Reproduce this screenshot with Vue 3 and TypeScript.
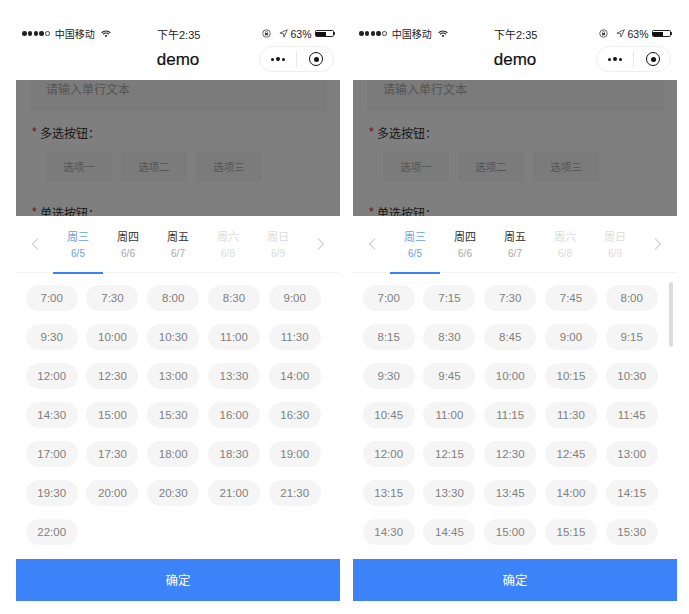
<script setup lang="ts">
interface Day {
  week: string
  date: string
  state: 'active' | 'normal' | 'disabled'
}

const days: Day[] = [
  { week: '周三', date: '6/5', state: 'active' },
  { week: '周四', date: '6/6', state: 'normal' },
  { week: '周五', date: '6/7', state: 'normal' },
  { week: '周六', date: '6/8', state: 'disabled' },
  { week: '周日', date: '6/9', state: 'disabled' }
]

const makeTimes = (step: number, count: number) => {
  const list: string[] = []
  for (let i = 0; i < count; i++) {
    const total = 7 * 60 + i * step
    const m = total % 60
    list.push(Math.floor(total / 60) + ':' + (m < 10 ? '0' + m : m))
  }
  return list
}

const phones = [
  { id: 'half', times: makeTimes(30, 31), scroll: false },
  { id: 'quarter', times: makeTimes(15, 35), scroll: true }
]
</script>

<template>
  <div class="page">
    <section v-for="phone in phones" :key="phone.id" class="phone">
      <div class="status">
        <div class="status-left">
          <span class="signal">
            <i v-for="n in 4" :key="n" class="dot"></i>
            <i class="dot empty"></i>
          </span>
          <span class="carrier">中国移动</span>
          <svg class="wifi" width="10" height="8" viewBox="0 0 11 9">
            <path d="M.6 3.1a7 7 0 0 1 9.8 0M2.2 4.8a4.7 4.7 0 0 1 6.600 0" fill="none" stroke="#222" stroke-width="1.200" />
            <path d="M3.900 6.400a2.300 2.300 0 0 1 3.200 0L5.500 8.200z" fill="#222" />
          </svg>
        </div>
        <span class="clock">下午2:35</span>
        <div class="status-right">
          <svg class="lock" width="9" height="9" viewBox="0 0 10 10">
            <circle cx="5" cy="5" r="4.200" fill="none" stroke="#444" stroke-width=".9" />
            <rect x="3.200" y="4.500" width="3.600" height="2.500" fill="#444" />
            <path d="M3.900 4.500V3.600a1.100 1.100 0 0 1 2.200 0v.9" fill="none" stroke="#444" stroke-width=".7" />
          </svg>
          <svg class="arrow" width="9" height="9" viewBox="0 0 10 10">
            <path d="M9.300.8 1 4.600l3.900.5.600 3.900z" fill="none" stroke="#444" stroke-width=".9" stroke-linejoin="round" />
          </svg>
          <span class="percent">63%</span>
          <span class="battery"><span class="battery-fill"></span></span>
          <span class="battery-tip"></span>
        </div>
      </div>

      <header class="nav">
        <span class="nav-title">demo</span>
        <div class="capsule">
          <span class="more"><i></i><i class="big"></i><i></i></span>
          <span class="divider"></span>
          <span class="target"><i></i></span>
        </div>
      </header>

      <div class="backdrop">
        <div class="form">
          <div class="input">请输入单行文本</div>
          <div class="label"><span class="star">*</span>多选按钮：</div>
          <div class="options">
            <span class="option">选项一</span>
            <span class="option">选项二</span>
            <span class="option">选项三</span>
          </div>
          <div class="label single"><span class="star">*</span>单选按钮：</div>
        </div>
        <div class="mask"></div>
      </div>

      <div class="picker">
        <div class="tabs">
          <svg class="chevron" width="8" height="14" viewBox="0 0 8 14">
            <path d="M7 1.500 1.500 7 7 12.500" fill="none" stroke="#b4b4b4" stroke-width="1" />
          </svg>
          <div class="tab-list">
            <div v-for="day in days" :key="day.date" class="tab" :class="day.state">
              <span class="tab-week">{{ day.week }}</span>
              <span class="tab-date">{{ day.date }}</span>
            </div>
          </div>
          <svg class="chevron" width="8" height="14" viewBox="0 0 8 14">
            <path d="M1 1.500 6.500 7 1 12.500" fill="none" stroke="#b4b4b4" stroke-width="1" />
          </svg>
        </div>

        <div class="slots">
          <div class="grid">
            <span v-for="t in phone.times" :key="t" class="slot">{{ t }}</span>
          </div>
          <div v-if="phone.scroll" class="scrollbar"></div>
        </div>

        <div class="confirm">确定</div>
      </div>
    </section>
  </div>
</template>

<style>
html,
body {
  margin: 0;
  background: #fff;
}
</style>

<style scoped>
.page {
  display: flex;
  gap: 13px;
  width: 689px;
  height: 614px;
  padding: 22px 0 0 16px;
  box-sizing: border-box;
  overflow: hidden;
  font-family: "Liberation Sans", "Noto Sans CJK SC", sans-serif;
}

.phone {
  display: flex;
  flex-direction: column;
  width: 324px;
  height: 579px;
}

.status {
  position: relative;
  display: flex;
  align-items: center;
  justify-content: space-between;
  height: 23px;
  padding: 0 5px 0 6px;
  color: #222;
  font-size: 10px;
}

.status-left,
.status-right {
  display: flex;
  align-items: center;
}

.signal {
  display: flex;
  gap: 1.300px;
  margin-right: 5px;
}

.dot {
  width: 4.500px;
  height: 4.500px;
  border-radius: 50%;
  background: #222;
}

.dot.empty {
  box-sizing: border-box;
  background: transparent;
  border: 0.6px solid #444;
}

.wifi {
  margin-left: 6px;
}

.clock {
  position: absolute;
  left: 141px;
  font-size: 11px;
}

.arrow {
  margin-left: 8px;
}

.percent {
  margin-left: 2px;
  font-size: 10.500px;
}

.battery {
  display: flex;
  width: 19px;
  height: 7px;
  margin-left: 3px;
  padding: 0.5px;
  box-sizing: border-box;
  border: 0.7px solid #222;
  border-radius: 1.500px;
}

.battery-fill {
  width: 62%;
  background: #111;
}

.battery-tip {
  width: 1.500px;
  height: 3px;
  background: #333;
}

.nav {
  position: relative;
  display: flex;
  align-items: center;
  justify-content: center;
  height: 35px;
}

.nav-title {
  margin-top: -5px;
  color: #111;
  font-size: 17px;
  -webkit-text-stroke: 0.2px #111;
}

.capsule {
  position: absolute;
  top: 1px;
  right: 6px;
  display: flex;
  align-items: center;
  width: 75px;
  height: 26px;
  box-sizing: border-box;
  border: 1px solid #f0f0f0;
  border-radius: 13px;
}

.more {
  display: flex;
  align-items: center;
  justify-content: center;
  gap: 1.500px;
  width: 36px;
}

.more i {
  width: 3px;
  height: 3px;
  border-radius: 50%;
  background: #111;
}

.more i.big {
  width: 4.500px;
  height: 4.500px;
}

.divider {
  width: 1px;
  height: 16px;
  background: #e8e8e8;
}

.target {
  display: flex;
  align-items: center;
  justify-content: center;
  width: 14px;
  height: 14px;
  margin-left: 12px;
  box-sizing: border-box;
  border: 1.500px solid #111;
  border-radius: 50%;
}

.target i {
  width: 5px;
  height: 5px;
  border-radius: 50%;
  background: #111;
}

.backdrop {
  position: relative;
  height: 136px;
  overflow: hidden;
  background: #fff;
}

.mask {
  position: absolute;
  inset: 0;
  background: rgba(0, 0, 0, 0.5);
}

.form {
  padding: 0 13px 0 14px;
}

.input {
  height: 31px;
  padding: 2px 0 0 16px;
  box-sizing: border-box;
  background: #f6f6f6;
  color: #aaa;
  font-size: 12px;
  line-height: 17px;
}

.label {
  display: flex;
  align-items: center;
  height: 18px;
  margin: 12px 0 0 2px;
  color: #333;
  font-size: 12px;
}

.star {
  width: 8px;
  color: #d0171b;
  font-size: 12px;
}

.options {
  display: flex;
  gap: 9px;
  margin: 10px 0 0 16px;
}

.option {
  display: flex;
  align-items: center;
  justify-content: center;
  width: 66px;
  height: 31px;
  background: #f6f6f6;
  color: #a8a8a8;
  font-size: 10.500px;
}

.label.single {
  margin-top: 21px;
}

.picker {
  display: flex;
  flex-direction: column;
  flex: 1;
  background: #fff;
}

.tabs {
  display: flex;
  align-items: center;
  justify-content: space-between;
  height: 57px;
  padding: 0 15px;
  box-sizing: border-box;
  border-bottom: 1px solid #f2f2f2;
}

.tab-list {
  display: flex;
  width: 250px;
}

.tab {
  position: relative;
  display: flex;
  flex: 1;
  flex-direction: column;
  align-items: center;
  height: 56px;
  padding-top: 13px;
  box-sizing: border-box;
}

.tab-week {
  color: #333;
  font-size: 11px;
  line-height: 16px;
}

.tab-date {
  margin-top: 2px;
  color: #a8a8a8;
  font-size: 10px;
  line-height: 14px;
}

.tab.active .tab-week,
.tab.active .tab-date {
  color: #6a9eea;
}

.tab.active::after {
  content: "";
  position: absolute;
  left: 0;
  right: 0;
  bottom: -2px;
  height: 2px;
  background: #3b82f6;
}

.tab.disabled .tab-week,
.tab.disabled .tab-date {
  color: #dcdcdc;
}

.slots {
  position: relative;
  flex: 1;
  min-height: 0;
  padding: 12px 0 0 9.700px;
  overflow: hidden;
}

.grid {
  display: grid;
  grid-template-columns: repeat(5, 52px);
  grid-auto-rows: 26px;
  gap: 13px 8.750px;
}

.slot {
  display: flex;
  align-items: center;
  justify-content: center;
  border-radius: 13px;
  background: #f5f5f5;
  color: #808080;
  font-size: 11.500px;
}

.scrollbar {
  position: absolute;
  top: 9px;
  right: 4px;
  width: 4px;
  height: 65px;
  border-radius: 2px;
  background: #dcdcdc;
}

.confirm {
  display: flex;
  align-items: center;
  justify-content: center;
  flex: none;
  height: 42px;
  padding-bottom: 2px;
  box-sizing: border-box;
  background: #3c82f8;
  color: #fff;
  font-size: 12.500px;
}

.chevron {
  flex: none;
}
</style>
